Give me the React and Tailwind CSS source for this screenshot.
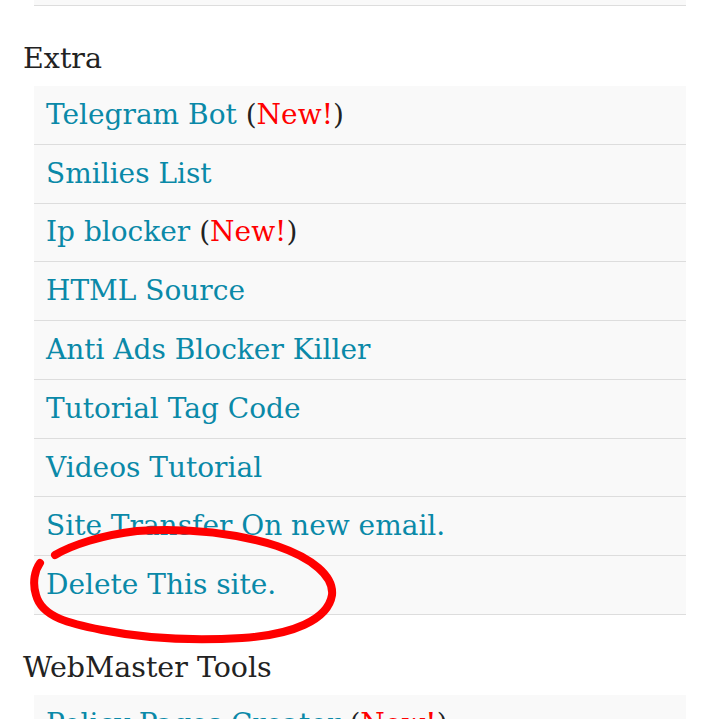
import React from 'react';

const font = { fontFamily: '"DejaVu Serif", "Liberation Serif", serif' };

const extraLinks = [
  { label: 'Telegram Bot', isNew: true },
  { label: 'Smilies List' },
  { label: 'Ip blocker', isNew: true },
  { label: 'HTML Source' },
  { label: 'Anti Ads Blocker Killer' },
  { label: 'Tutorial Tag Code' },
  { label: 'Videos Tutorial' },
  { label: 'Site Transfer On new email.' },
  { label: 'Delete This site.', marked: true },
];

const Row = ({ label, isNew, marked }) => (
  <li className="relative border-b border-[#dddddd] bg-[#f9f9f9] pl-3 py-[10.9px] text-[28px] leading-[36px]">
    <a href="#" className="text-[#0a89a8]">{label}</a>
    {isNew && (
      <span className="text-[#222]">
        {' '}(<span className="text-[#ff0000]">New!</span>)
      </span>
    )}
    {marked && (
      <svg
        className="pointer-events-none absolute left-[-12px] top-[-36px] overflow-visible"
        width="320"
        height="130"
        viewBox="0 0 320 130"
      >
        {/* hand drawn circle around the item */}
        <path
          d="M33 35 C 50 25, 80 15, 115 11 C 160 8, 210 12, 255 26 C 290 38, 312 56, 310 75 C 306 100, 270 115, 220 118 C 170 121, 120 118, 80 110 C 50 104, 20 98, 14 75 C 10 62, 13 50, 18 43"
          fill="none"
          stroke="#ff0000"
          strokeWidth="8"
          strokeLinecap="round"
          strokeLinejoin="round"
        />
      </svg>
    )}
  </li>
);

export default function App() {
  return (
    <div className="min-h-[719px] bg-white pl-[23px] pr-[34px]" style={font}>
      <ul className="ml-[11px]">
        <li className="h-[6px] border-b border-[#dddddd] bg-[#f9f9f9]"></li>
      </ul>
      <h3 className="pt-[33px] pb-[8px] text-[28.5px] leading-[39px] text-[#222]">Extra</h3>
      <ul className="ml-[11px]">
        {extraLinks.map((l) => (
          <Row key={l.label} {...l} />
        ))}
      </ul>
      <h3 className="pt-[33px] pb-[8px] text-[28.5px] leading-[39px] text-[#222]">WebMaster Tools</h3>
      <ul className="ml-[11px]">
        <Row label="Policy Pages Creator" isNew />
      </ul>
    </div>
  );
}
